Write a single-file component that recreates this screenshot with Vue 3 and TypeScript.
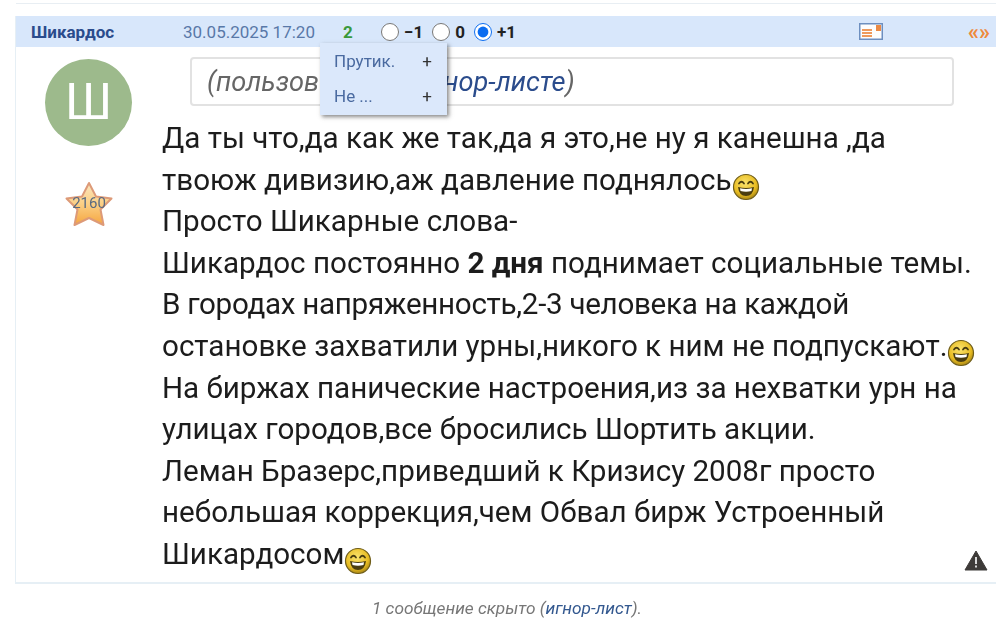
<template>
  <div class="page">
    <div class="prev-post"></div>
    <div class="post">
      <div class="post-head">
        <span class="author">Шикардос</span>
        <span class="date">30.05.2025 17:20</span>
        <span class="score">2</span>
        <div class="votes">
          <label v-for="v in votes" :key="v.label" class="vote">
            <input type="radio" name="vote" :checked="v.checked" />
            <span>{{ v.label }}</span>
          </label>
        </div>
        <svg class="card-icon" width="24" height="17" viewBox="0 0 24 17">
          <rect x="0.75" y="0.75" width="22.5" height="15.5" fill="#fdfdfd" stroke="#6d8fc0" stroke-width="1.5" />
          <rect x="3" y="6" width="10" height="2" fill="#ee9a5c" />
          <rect x="3" y="9" width="10" height="2" fill="#ee9a5c" />
          <rect x="3" y="12" width="10" height="2" fill="#ee9a5c" />
          <rect x="17" y="2" width="5" height="6" fill="#ea8a45" />
        </svg>
        <span class="quote">«»</span>

        <div class="menu">
          <div v-for="m in menuItems" :key="m" class="menu-row">
            <span>{{ m }}</span>
            <span class="plus">+</span>
          </div>
        </div>
      </div>

      <div class="post-body">
        <div class="side">
          <div class="avatar">Ш</div>
          <div class="star">
            <svg width="48" height="46" viewBox="0 0 48 46">
              <defs>
                <linearGradient id="starFill" x1="0" y1="0" x2="0" y2="1">
                  <stop offset="0" stop-color="#fbe6bf" />
                  <stop offset="0.5" stop-color="#fbcf84" />
                  <stop offset="1" stop-color="#f5a53f" />
                </linearGradient>
              </defs>
              <path
                d="M24 2 L31 15.5 L46.5 17.5 L35.5 28.5 L38.5 44 L24 37 L9.5 44 L12.5 28.5 L1.5 17.5 L17 15.5 Z"
                fill="url(#starFill)"
                stroke="#dd9a78"
                stroke-width="2"
                stroke-linejoin="round"
              />
            </svg>
            <span class="star-num">2160</span>
          </div>
        </div>

        <div class="content">
          <div class="notice">(пользователь в <a class="notice-link">игнор-листе</a>)</div>
          <div class="message">
            <div v-for="(line, i) in lines" :key="i" class="line" :class="{ tight: line.tight }">
              <template v-if="line.bold">
                {{ line.text }} <b>{{ line.bold }}</b> {{ line.after }}
              </template>
              <template v-else>{{ line.text }}</template>
              <svg v-if="line.smile" class="smile" width="28" height="28" viewBox="0 0 28 28">
                <defs>
                  <radialGradient :id="'sm' + i" cx="0.45" cy="0.35" r="0.7">
                    <stop offset="0" stop-color="#fbe46e" />
                    <stop offset="0.65" stop-color="#e8bc22" />
                    <stop offset="1" stop-color="#9a7a12" />
                  </radialGradient>
                </defs>
                <circle cx="14" cy="14" r="12.5" :fill="'url(#sm' + i + ')'" stroke="#6e5c18" stroke-width="1.2" />
                <path d="M7 10.5 Q9.5 7 12 10.5" fill="none" stroke="#4a3d10" stroke-width="1.8" stroke-linecap="round" />
                <path d="M16 10.5 Q18.5 7 21 10.5" fill="none" stroke="#4a3d10" stroke-width="1.8" stroke-linecap="round" />
                <path d="M6 14 Q14 16 22 14 Q21 23 14 23 Q7 23 6 14 Z" fill="#4a3d10" />
                <path d="M8 15.2 Q14 16.8 20 15.2 L19.5 18 Q14 19.5 8.5 18 Z" fill="#fff" />
              </svg>
            </div>
          </div>
          <svg class="warn" width="24" height="21" viewBox="0 0 24 21">
            <path d="M12 1 L23 20 L1 20 Z" fill="#3d3a38" stroke="#3d3a38" stroke-linejoin="round" />
            <rect x="11" y="7" width="2" height="7" fill="#d8d8d8" />
            <rect x="11" y="15.500" width="2" height="2" fill="#d8d8d8" />
          </svg>
        </div>
      </div>
    </div>
    <div class="hidden-note">1 сообщение скрыто (<a class="hidden-link">игнор-лист</a>).</div>
  </div>
</template>

<script setup lang="ts">
interface Line {
  text: string
  bold?: string
  after?: string
  smile?: boolean
  tight?: boolean
}

const votes = [
  { label: '−1', checked: false },
  { label: '0', checked: false },
  { label: '+1', checked: true },
]

const menuItems = ['Прутик.', 'Не ...']

const lines: Line[] = [
  { text: 'Да ты что,да как же так,да я это,не ну я канешна ,да' },
  { text: 'твоюж дивизию,аж давление поднялось', smile: true },
  { text: 'Просто Шикарные слова-' },
  { text: 'Шикардос постоянно', bold: '2 дня', after: 'поднимает социальные темы.' },
  { text: 'В городах напряженность,2-3 человека на каждой', tight: true },
  { text: 'остановке захватили урны,никого к ним не подпускают.', smile: true },
  { text: 'На биржах панические настроения,из за нехватки урн на' },
  { text: 'улицах городов,все бросились Шортить акции.' },
  { text: 'Леман Бразерс,приведший к Кризису 2008г просто' },
  { text: 'небольшая коррекция,чем Обвал бирж Устроенный' },
  { text: 'Шикардосом', smile: true },
]
</script>

<style>
html,
body {
  margin: 0;
  background: #fff;
  overflow: hidden;
}
</style>

<style scoped>
.page {
  width: 996px;
  height: 625px;
  overflow: hidden;
  font-family: Roboto, "Liberation Sans", sans-serif;
  color: #1a1a1a;
  filter: blur(0.4px);
}

.prev-post {
  height: 3px;
  margin-left: 16px;
  border-bottom: 1px solid #e8eef3;
  margin-bottom: 12px;
}

.post {
  margin-left: 15px;
  border-left: 1px solid #e6eff5;
  border-bottom: 2px solid #e6eff5;
}

.post-head {
  position: relative;
  height: 31px;
  display: flex;
  align-items: center;
  background: #d8e7fb;
  font-size: 17px;
}

.author {
  margin-left: 15px;
  width: 152px;
  flex: none;
  font-weight: 700;
  color: #2b4c8c;
}

.date {
  width: 160px;
  flex: none;
  color: #5878a8;
}

.score {
  width: 38px;
  flex: none;
  font-weight: 700;
  color: #3a9a3c;
}

.votes {
  display: flex;
  align-items: center;
  gap: 9px;
  font-weight: 700;
  color: #222;
}

.vote {
  display: flex;
  align-items: center;
  gap: 5px;
}

.vote input {
  width: 18px;
  height: 18px;
  margin: 0;
  accent-color: #0a6cf0;
}

.card-icon {
  margin-left: auto;
}

.quote {
  margin-left: 85px;
  margin-right: 6px;
  color: #ee8a3c;
  font-weight: 700;
  font-size: 22px;
}

.menu {
  position: absolute;
  left: 304px;
  top: 27px;
  width: 127px;
  height: 72px;
  padding: 0 14px;
  box-sizing: border-box;
  background: #dbe8fb;
  box-shadow: 2px 2px 4px rgba(40, 40, 40, 0.55);
  font-size: 17px;
  color: #4a6aa0;
  z-index: 2;
}

.menu-row {
  height: 35px;
  display: flex;
  align-items: center;
  justify-content: space-between;
}

.plus {
  color: #333;
  margin-right: 1px;
}

.post-body {
  display: flex;
  height: 535px;
}

.side {
  width: 146px;
  flex: none;
  display: flex;
  flex-direction: column;
  align-items: center;
  padding-top: 12px;
  box-sizing: border-box;
}

.avatar {
  width: 87px;
  height: 87px;
  margin-right: 1px;
  border-radius: 50%;
  background: #9dba8c;
  color: #fff;
  font-size: 50px;
  line-height: 87px;
  text-align: center;
}

.star {
  position: relative;
  margin-top: 35px;
  width: 48px;
  height: 46px;
}

.star-num {
  position: absolute;
  left: 0;
  right: 0;
  top: 13px;
  text-align: center;
  font-size: 15px;
  color: #5a6a80;
}

.content {
  position: relative;
  flex: 1;
  min-width: 0;
}

.notice {
  margin: 10px 42px 0 28px;
  height: 49px;
  box-sizing: border-box;
  border: 2px solid #e2e2e2;
  border-radius: 4px;
  padding-left: 15px;
  font-size: 27.2px;
  line-height: 47px;
  font-style: italic;
  color: #666;
}

.notice-link {
  color: #2b4c8c;
}

.message {
  margin-top: 12px;
  font-size: 29.6px;
  color: #1c1c1c;
}

.line {
  height: 41.6px;
  line-height: 41.6px;
  white-space: nowrap;
}

.line.tight {
  letter-spacing: -0.3px;
}

.line b {
  font-weight: 700;
}

.smile {
  vertical-align: -11px;
}

.warn {
  position: absolute;
  right: 8px;
  bottom: 11px;
}

.hidden-note {
  margin-top: 14px;
  padding-left: 18px;
  text-align: center;
  font-size: 17.3px;
  font-style: italic;
  color: #777;
}

.hidden-link {
  color: #33588f;
}
</style>
